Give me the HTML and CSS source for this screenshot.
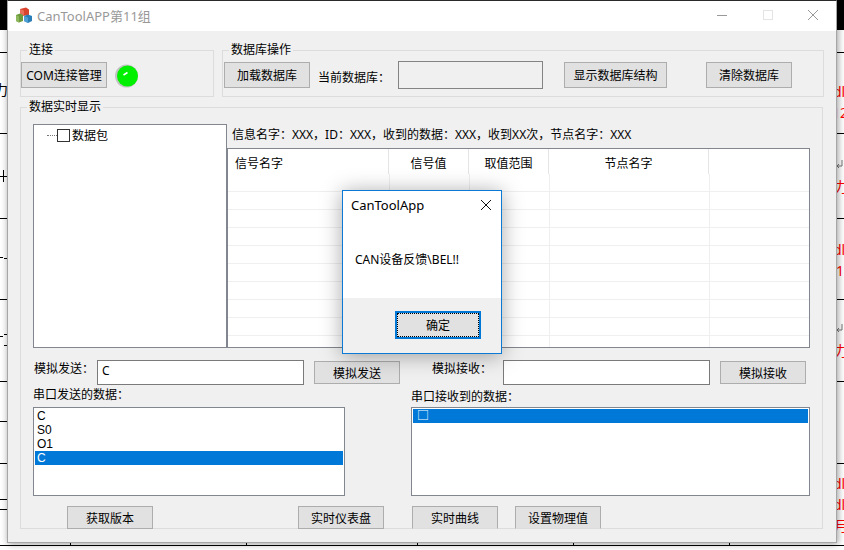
FILE: index.html
```html
<!DOCTYPE html>
<html lang="zh-CN">
<head>
    <meta charset="UTF-8">
    <title>CanToolAPP第11组</title>
    <link rel="stylesheet" href="styles.css">
</head>
<body>
    <!-- document lying behind the app window -->
    <svg class="desktop" width="844" height="550" viewBox="0 0 844 550">
        <rect x="0" y="0" width="844" height="30" fill="#000"/>
        <rect x="0" y="30" width="844" height="520" fill="#fff"/>
        <g stroke="#000" stroke-width="1">
            <path d="M0 52.5H8M0 133.5H8M0 218.5H8M0 299.5H8M0 381.5H8M0 421.5H8M0 463.5H8M0 499.5H8M0 509.5H8"/>
            <path d="M836 52.5H844M836 133.5H844M836 218.5H844M836 299.5H844M836 381.5H844M836 463.5H844"/>
            <path d="M0 545.5H844"/>
            <path d="M70.5 542V545M246.5 542V545M417.5 542V545M573.5 542V545M729.5 542V545"/>
            <path d="M0 176.5H7M3.5 170V182M0 257.5H3M4 258.5H8M0 336.5H3M4 334.5H8M4 345.5H8"/>
        </g>
        <text x="-6" y="95" class="desktop-black">力</text>
        <g class="desktop-red">
            <text x="833" y="97">dl</text>
            <text x="832" y="118">12</text>
            <text x="834" y="192">力</text>
            <text x="833" y="255">dl</text>
            <text x="836" y="276">15</text>
            <text x="834" y="356">力</text>
            <text x="833" y="489">dl</text>
            <text x="833" y="510">dl</text>
            <text x="834" y="531">月</text>
        </g>
        <g class="desktop-enter" fill="none" stroke="#777" stroke-width="1">
            <path d="M842 160V166H837M839 164L837 166L839 168"/>
            <path d="M842 324V330H837M839 328L837 330L839 332"/>
        </g>
    </svg>

    <div class="window">
        <div class="titlebar">
            <svg class="app-icon" width="16" height="16" viewBox="0 0 16 16">
                <path d="M4 2L10 0.5L13 2.5V8L7 9L4 7Z" fill="#d9442e"/>
                <path d="M4 2L8 3.5V9L4 7Z" fill="#e8705a"/>
                <path d="M0 8L4 6.5L7 8V14L3 15.5L0 14Z" fill="#6c9a3c"/>
                <path d="M0 8L3 9.5V15.5L0 14Z" fill="#8db85c"/>
                <path d="M8 9L12 7.5L16 9V14L12 16L8 14Z" fill="#2a7fb8"/>
                <path d="M8 9L12 10.5V16L8 14Z" fill="#4f9fd4"/>
            </svg>
            <span class="title-text">CanToolAPP第11组</span>
            <div class="title-controls">
                <span class="control">
                    <svg width="12" height="12" viewBox="0 0 12 12"><path d="M1 6.5H11" stroke="#999" fill="none"/></svg>
                </span>
                <span class="control">
                    <svg width="12" height="12" viewBox="0 0 12 12"><rect x="1.5" y="1.5" width="9" height="9" stroke="#e4e4e4" fill="none"/></svg>
                </span>
                <span class="control">
                    <svg width="12" height="12" viewBox="0 0 12 12"><path d="M1 1L11 11M11 1L1 11" stroke="#999" fill="none"/></svg>
                </span>
            </div>
        </div>

        <div class="client">
            <div class="top-row">
                <fieldset class="group group-conn">
                    <legend>连接</legend>
                    <div class="group-row">
                        <button class="btn">COM连接管理</button>
                        <svg class="led" width="24" height="24" viewBox="0 0 24 24">
                            <circle cx="11.5" cy="12" r="11.5" fill="#c4c4c4"/>
                            <circle cx="12.5" cy="12" r="10.5" fill="#00f000"/>
                            <path d="M8.5 11L12.5 8.5" stroke="#fff" stroke-width="1.5"/>
                        </svg>
                    </div>
                </fieldset>
                <fieldset class="group group-db">
                    <legend>数据库操作</legend>
                    <div class="group-row">
                        <button class="btn">加载数据库</button>
                        <span class="db-label">当前数据库：</span>
                        <div class="db-name"></div>
                        <button class="btn btn-wide">显示数据库结构</button>
                        <button class="btn btn-clear">清除数据库</button>
                    </div>
                </fieldset>
            </div>

            <fieldset class="group group-live">
                <legend>数据实时显示</legend>

                <div class="live-top">
                    <div class="tree">
                        <div class="tree-node">
                            <span class="tree-dots"></span>
                            <span class="tree-check"></span>
                            <span>数据包</span>
                        </div>
                    </div>
                    <div class="signal-area">
                        <div class="info-line">信息名字：XXX，ID：XXX，收到的数据：XXX，收到XX次，节点名字：XXX</div>
                        <div class="signal-box">
                            <table class="signal-table">
                                <colgroup>
                                    <col class="col-name"><col class="col-value"><col class="col-range"><col class="col-node"><col>
                                </colgroup>
                                <thead>
                                    <tr>
                                        <th class="th-left">信号名字</th>
                                        <th>信号值</th>
                                        <th>取值范围</th>
                                        <th>节点名字</th>
                                        <th class="th-last"></th>
                                    </tr>
                                </thead>
                                <tbody>
                                    <tr><td></td><td></td><td></td><td></td><td></td></tr>
                                    <tr><td></td><td></td><td></td><td></td><td></td></tr>
                                    <tr><td></td><td></td><td></td><td></td><td></td></tr>
                                    <tr><td></td><td></td><td></td><td></td><td></td></tr>
                                    <tr><td></td><td></td><td></td><td></td><td></td></tr>
                                    <tr><td></td><td></td><td></td><td></td><td></td></tr>
                                    <tr><td></td><td></td><td></td><td></td><td></td></tr>
                                    <tr><td></td><td></td><td></td><td></td><td></td></tr>
                                    <tr><td></td><td></td><td></td><td></td><td></td></tr>
                                    <tr><td></td><td></td><td></td><td></td><td></td></tr>
                                </tbody>
                            </table>
                        </div>
                    </div>
                </div>

                <div class="sim-row">
                    <span class="sim-label">模拟发送：</span>
                    <div class="sim-input">C</div>
                    <button class="btn btn-sim">模拟发送</button>
                    <span class="sim-label sim-label-recv">模拟接收：</span>
                    <div class="sim-input"></div>
                    <button class="btn btn-sim">模拟接收</button>
                </div>

                <div class="lists">
                    <div class="list-col list-send">
                        <div class="list-label">串口发送的数据：</div>
                        <ul class="listbox">
                            <li>C</li>
                            <li>S0</li>
                            <li>O1</li>
                            <li class="selected">C</li>
                        </ul>
                    </div>
                    <div class="list-col list-recv">
                        <div class="list-label">串口接收到的数据：</div>
                        <ul class="listbox">
                            <li class="selected">□</li>
                        </ul>
                    </div>
                </div>

                <div class="bottom-row">
                    <button class="btn btn-sim btn-version">获取版本</button>
                    <button class="btn btn-sim btn-gauge">实时仪表盘</button>
                    <button class="btn btn-sim btn-curve btn-cut">实时曲线</button>
                    <button class="btn btn-sim btn-phys btn-cut">设置物理值</button>
                </div>
            </fieldset>
        </div>
    </div>

    <div class="dialog">
        <div class="dialog-title">
            <span>CanToolApp</span>
            <svg width="12" height="12" viewBox="0 0 12 12"><path d="M1 1L11 11M11 1L1 11" stroke="#111" fill="none"/></svg>
        </div>
        <div class="dialog-body">CAN设备反馈\BEL!!</div>
        <div class="dialog-footer">
            <button class="dialog-ok">确定</button>
        </div>
    </div>
</body>
</html>
```

FILE: styles.css
```css
* {
    box-sizing: border-box;
}
body {
    margin: 0;
    width: 844px;
    height: 550px;
    overflow: hidden;
    background-color: #fff;
    font-family: "Noto Sans", "Noto Sans CJK SC", sans-serif;
    font-size: 12px;
    color: #000;
}
.desktop {
    position: absolute;
    left: 0;
    top: 0;
}
.desktop-black {
    font-size: 14px;
    fill: #000;
}
.desktop-red {
    font-size: 14px;
    fill: #f00;
}

/* main window */
.window {
    position: absolute;
    left: 7px;
    top: 0;
    width: 830px;
    height: 543px;
    background-color: #f0f0f0;
    border: 1px solid #a6a6a6;
    border-top-color: #2b2b2b;
    box-shadow: 1px 1px 7px rgba(0, 0, 0, 0.4);
}
.titlebar {
    display: flex;
    align-items: center;
    height: 30px;
    background-color: #fff;
    padding: 0 0 2px 8px;
}
.title-text {
    margin-left: 5px;
    font-size: 13px;
    color: #999;
}
.title-controls {
    display: flex;
    margin-left: auto;
}
.control {
    display: flex;
    align-items: center;
    justify-content: center;
    width: 45.5px;
    height: 28px;
}
.client {
    padding: 11px 0 0 12px;
}
.top-row {
    display: flex;
    gap: 8px;
}

/* group boxes */
.group {
    margin: 0;
    min-width: 0;
    padding: 3px 1px 7px 0;
    border: 1px solid #dcdcdc;
}
.group legend {
    margin-left: 6px;
    padding: 0 2px;
    line-height: 16px;
    height: 16px;
}
.group-conn {
    width: 194px;
}
.group-db {
    width: 602px;
    padding-left: 1px;
}
.group-db legend {
    margin-left: 5px;
}
.group-row {
    display: flex;
    align-items: flex-start;
}
.led {
    margin-left: 8px;
    margin-top: 3px;
}
.btn {
    flex: none;
    width: 86px;
    height: 26px;
    margin-top: 1px;
    padding: 0;
    background-color: #e1e1e1;
    border: 1px solid #adadad;
    font-family: inherit;
    font-size: 12px;
    color: #000;
}
.db-label {
    margin: 9px 0 0 8px;
    line-height: 16px;
    width: 80px;
}
.db-name {
    width: 145px;
    height: 28px;
    border: 1px solid #848484;
    background-color: #f0f0f0;
}
.btn-wide {
    width: 103px;
    margin-left: 21px;
}
.btn-clear {
    margin-left: 39px;
}

/* live data group */
.group-live {
    width: 803px;
    margin-top: 2px;
    padding: 9px 0 0 12px;
}
.group-live legend {
    margin-left: -6px;
}
.live-top {
    display: flex;
    height: 224px;
}
.tree {
    width: 194px;
    border: 1px solid #82878f;
    background-color: #fff;
}
.tree-node {
    display: flex;
    align-items: center;
    height: 16px;
    margin-top: 2px;
    padding-left: 13px;
}
.tree-dots {
    width: 10px;
    border-top: 1px dotted #777;
}
.tree-check {
    width: 13px;
    height: 13px;
    margin-right: 2px;
    border: 1px solid #333;
}
.signal-area {
    display: flex;
    flex-direction: column;
    width: 583px;
}
.info-line {
    height: 24px;
    padding-left: 5px;
    line-height: 21px;
    white-space: nowrap;
}
.signal-box {
    height: 200px;
    overflow: hidden;
    border: 1px solid #82878f;
    background-color: #fff;
}
.signal-table {
    width: 581px;
    table-layout: fixed;
    border-collapse: separate;
    border-spacing: 0;
}
.col-name {
    width: 161px;
}
.col-value,
.col-range {
    width: 80px;
}
.col-node {
    width: 160px;
}
.signal-table th {
    height: 25px;
    padding: 3px 0 0;
    font-weight: normal;
    text-align: center;
    border-right: 1px solid #e4e4e4;
}
.signal-table th.th-left {
    padding-left: 7px;
    text-align: left;
}
.signal-table th.th-last {
    border-right: none;
}
.signal-table td {
    height: 18px;
    padding: 0;
    border-bottom: 1px solid #efefef;
}
.signal-table td + td {
    border-left: 1px solid #efefef;
}
.sim-row {
    display: flex;
    align-items: flex-start;
    margin-top: 12px;
}
.sim-label {
    width: 64px;
    padding: 1px 0 0 1px;
    line-height: 16px;
}
.sim-label-recv {
    width: 71px;
    margin-left: 32px;
    padding-left: 0;
}
.sim-input {
    width: 207px;
    height: 25px;
    padding-left: 4px;
    line-height: 20px;
    border: 1px solid #7a7a7a;
    background-color: #fff;
}
.btn-sim {
    height: 23px;
    margin-left: 10px;
}
.lists {
    display: flex;
    gap: 66px;
}
.list-col {
    display: flex;
    flex-direction: column;
}
.list-send {
    width: 312px;
}
.list-recv {
    width: 399px;
}
.list-label {
    height: 22px;
    line-height: 16px;
    padding-top: 2px;
}
.list-recv .list-label {
    padding-top: 4px;
}
.listbox {
    height: 89px;
    margin: 0;
    padding: 1px;
    list-style: none;
    border: 1px solid #82878f;
    background-color: #fff;
}
.list-send .listbox {
    font-family: "Liberation Sans", sans-serif;
}
.listbox li {
    height: 14px;
    padding-left: 2px;
    line-height: 14px;
}
.list-recv .listbox li {
    padding-left: 4px;
}
.listbox li.selected {
    background-color: #0078d7;
    color: #fff;
}
.bottom-row {
    display: flex;
    margin: 10px 0 -1px;
}
.bottom-row .btn {
    margin-top: 0;
}
.bottom-row .btn-version {
    margin-left: 34px;
}
.bottom-row .btn-gauge {
    margin-left: 145px;
}
.bottom-row .btn-curve {
    margin-left: 28px;
}
.bottom-row .btn-phys {
    margin-left: 17px;
}
.btn-cut {
    border-bottom-color: #dcdcdc;
}

/* message box */
.dialog {
    position: absolute;
    left: 342px;
    top: 190px;
    width: 160px;
    height: 164px;
    display: flex;
    flex-direction: column;
    background-color: #fff;
    border: 1px solid #0a7ad6;
    box-shadow: 0 2px 20px rgba(0, 0, 0, 0.35);
}
.dialog-title {
    display: flex;
    align-items: center;
    justify-content: space-between;
    height: 29px;
    padding: 0 9px 2px 8px;
    font-size: 13px;
}
.dialog-body {
    height: 78px;
    padding: 31px 0 0 12px;
    line-height: 18px;
}
.dialog-footer {
    flex: 1;
    padding: 13px 0 0 52px;
    background-color: #f0f0f0;
}
.dialog-ok {
    display: block;
    width: 86px;
    height: 28px;
    padding: 0;
    background-color: #e1e1e1;
    border: 2px solid #0078d7;
    outline: 1px dotted #000;
    outline-offset: -3px;
    font-family: inherit;
    font-size: 12px;
    color: #000;
}
```
